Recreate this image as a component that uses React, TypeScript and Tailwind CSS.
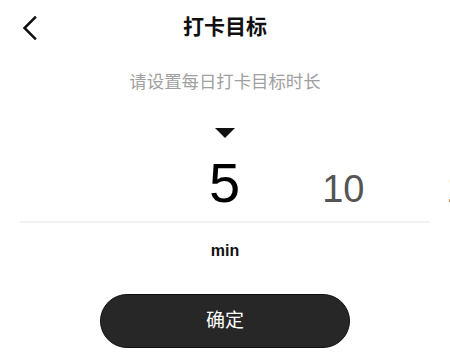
import React from "react"

const font = { fontFamily: '"Liberation Sans", "Noto Sans CJK SC", sans-serif' }

const values = [5, 10, 15, 20, 25, 30]

function BackIcon() {
  return (
    <svg width="20" height="28" viewBox="0 0 20 28" fill="none">
      <path d="M15 3.5 L4.5 14 L15 24.5" stroke="#111" strokeWidth="2.5" strokeLinecap="square" />
    </svg>
  )
}

export default function App() {
  const selected = 5

  return (
    <div className="w-[450px] h-[357px] bg-white overflow-hidden" style={font}>
      <div className="grid grid-cols-[60px_1fr_60px] items-center h-[54px]">
        <div className="pl-[20px] pt-[1px] flex items-center">
          <BackIcon />
        </div>
        <h1 className="text-center text-[21px] font-bold text-[#111] leading-[28px]">打卡目标</h1>
        <div />
      </div>

      <p className="mt-[16px] text-center text-[17.4px] leading-[24px] text-[#a0a0a0]">
        请设置每日打卡目标时长
      </p>

      <div className="mt-[34px] flex justify-center">
        <svg width="20" height="10" viewBox="0 0 20 10">
          <path d="M0 0 H20 L10 10 Z" fill="#111" />
        </svg>
      </div>

      <div className="mt-[17px] overflow-hidden">
        <div className="flex items-baseline gap-[82px] pl-[209px] h-[56px]">
          {values.map((v) => (
            <div
              key={v}
              className={
                v === selected
                  ? "shrink-0 text-[56px] leading-[56px] text-black"
                  : "shrink-0 text-[38px] leading-[56px] text-[#555]"
              }
            >
              {v}
            </div>
          ))}
        </div>
      </div>

      <div className="mt-[10px] mx-5 h-[2px] bg-[#f2f2f2]" />

      <p className="mt-[18px] text-center text-[16px] leading-[20px] font-bold text-[#111]">min</p>

      <div className="mt-[33px] flex justify-center">
        <button className="w-[250px] h-[54px] rounded-full bg-[#272727] border border-[#111] text-white text-[19px]">
          确定
        </button>
      </div>
    </div>
  )
}
